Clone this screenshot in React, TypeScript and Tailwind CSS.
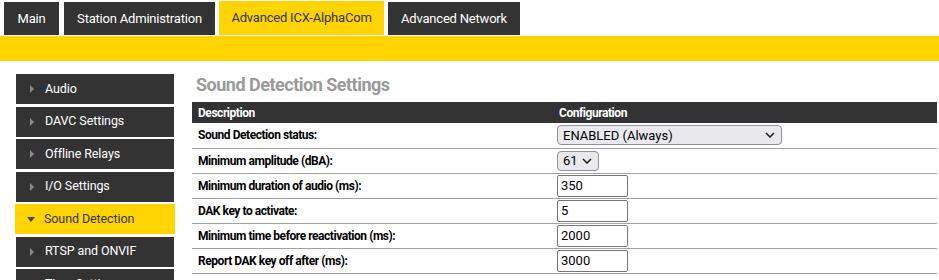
const tabs = [
  { label: "Main", active: false, w: "w-[55px]" },
  { label: "Station Administration", active: false, w: "w-[151px]" },
  { label: "Advanced ICX-AlphaCom", active: true, w: "w-[165px]" },
  { label: "Advanced Network", active: false, w: "w-[132px]" },
];

const menu = [
  "Audio",
  "DAVC Settings",
  "Offline Relays",
  "I/O Settings",
  "Sound Detection",
  "RTSP and ONVIF",
  "Time Settings",
];

type Row = {
  label: string;
  kind: "select" | "input";
  value: string;
  width: string;
};

const rows: Row[] = [
  { label: "Sound Detection status:", kind: "select", value: "ENABLED (Always)", width: "w-[225px]" },
  { label: "Minimum amplitude (dBA):", kind: "select", value: "61", width: "w-[42px]" },
  { label: "Minimum duration of audio (ms):", kind: "input", value: "350", width: "w-[71px]" },
  { label: "DAK key to activate:", kind: "input", value: "5", width: "w-[71px]" },
  { label: "Minimum time before reactivation (ms):", kind: "input", value: "2000", width: "w-[71px]" },
  { label: "Report DAK key off after (ms):", kind: "input", value: "3000", width: "w-[71px]" },
];

function Chevron() {
  return (
    <svg width="10" height="6" viewBox="0 0 10 6" className="shrink-0">
      <path d="M1 1 L5 5 L9 1" fill="none" stroke="#222" strokeWidth="1.6" />
    </svg>
  );
}

export default function App() {
  return (
    <div
      className="h-[280px] w-[939px] overflow-hidden bg-white text-[#222]"
      style={{ fontFamily: "Roboto, 'Liberation Sans', sans-serif" }}
    >
      {/* top tabs */}
      <div className="flex items-end gap-[4px] pl-[4px] pt-[1px]">
        {tabs.map((t, i) => (
          <div
            key={t.label}
            className={`flex items-center justify-center text-[13px] tracking-[-0.2px] ${t.w} ${
              i === 1 ? "ml-[1px]" : ""
            } ${
              t.active
                ? "h-[34px] bg-[#ffd400] text-[#333]"
                : "h-[33px] bg-[#333333] text-white"
            }`}
          >
            {t.label}
          </div>
        ))}
      </div>
      <div className="mt-[1px] h-[25px] bg-[#ffd400]" />

      <div className="flex gap-[18px] pl-[16px] pt-[13px]">
        {/* side menu */}
        <div className="flex w-[158px] flex-col gap-[2.5px]">
          {menu.map((m) => {
            const active = m === "Sound Detection";
            return (
              <div
                key={m}
                className={`flex h-[30px] shrink-0 items-center text-[12.5px] tracking-[-0.1px] ${
                  active
                    ? "-mx-[1px] bg-[#ffd400] pl-[12px] text-[#333]"
                    : "bg-[#333333] pl-[14px] text-white"
                }`}
              >
                {active ? (
                  <svg width="8" height="5" viewBox="0 0 8 5" className="mr-[9px]">
                    <path d="M0 0 H8 L4 5 Z" fill="#444" />
                  </svg>
                ) : (
                  <svg width="4" height="8" viewBox="0 0 4 8" className="mr-[11px]">
                    <path d="M0 0 L4 4 L0 8 Z" fill="#8a8a8a" />
                  </svg>
                )}
                {m}
              </div>
            );
          })}
        </div>

        {/* main */}
        <div className="w-[745px]">
          <h1 className="pl-[4px] text-[18px] leading-[22px] font-bold tracking-[-0.5px] text-[#9a9a9a]">
            Sound Detection Settings
          </h1>
          <table className="mt-[6px] w-full border-collapse text-[12px] tracking-[-0.45px]">
            <thead>
              <tr className="h-[21px] bg-[#333333] text-left font-bold text-white">
                <th className="w-[363px] pl-[6px] font-bold">Description</th>
                <th className="pl-[4px] font-bold">Configuration</th>
              </tr>
            </thead>
            <tbody>
              {rows.map((r) => (
                <tr key={r.label} className="h-[25px] border-b border-[#a3a3a3]">
                  <td className="pl-[6px] font-bold text-black">{r.label}</td>
                  <td className="pl-[2px]">
                    {r.kind === "select" ? (
                      <div
                        className={`flex h-[20px] items-center justify-between rounded-[4px] border border-[#8f8f9d] bg-[#e9e9ed] pr-[6px] pl-[5px] text-[13px] tracking-normal text-black ${r.width}`}
                      >
                        <span>{r.value}</span>
                        <Chevron />
                      </div>
                    ) : (
                      <div
                        className={`flex h-[22px] items-center rounded-[2px] border border-[#767676] bg-white pl-[3px] text-[13px] tracking-normal text-black ${r.width}`}
                      >
                        {r.value}
                      </div>
                    )}
                  </td>
                </tr>
              ))}
            </tbody>
          </table>
        </div>
      </div>
    </div>
  );
}
